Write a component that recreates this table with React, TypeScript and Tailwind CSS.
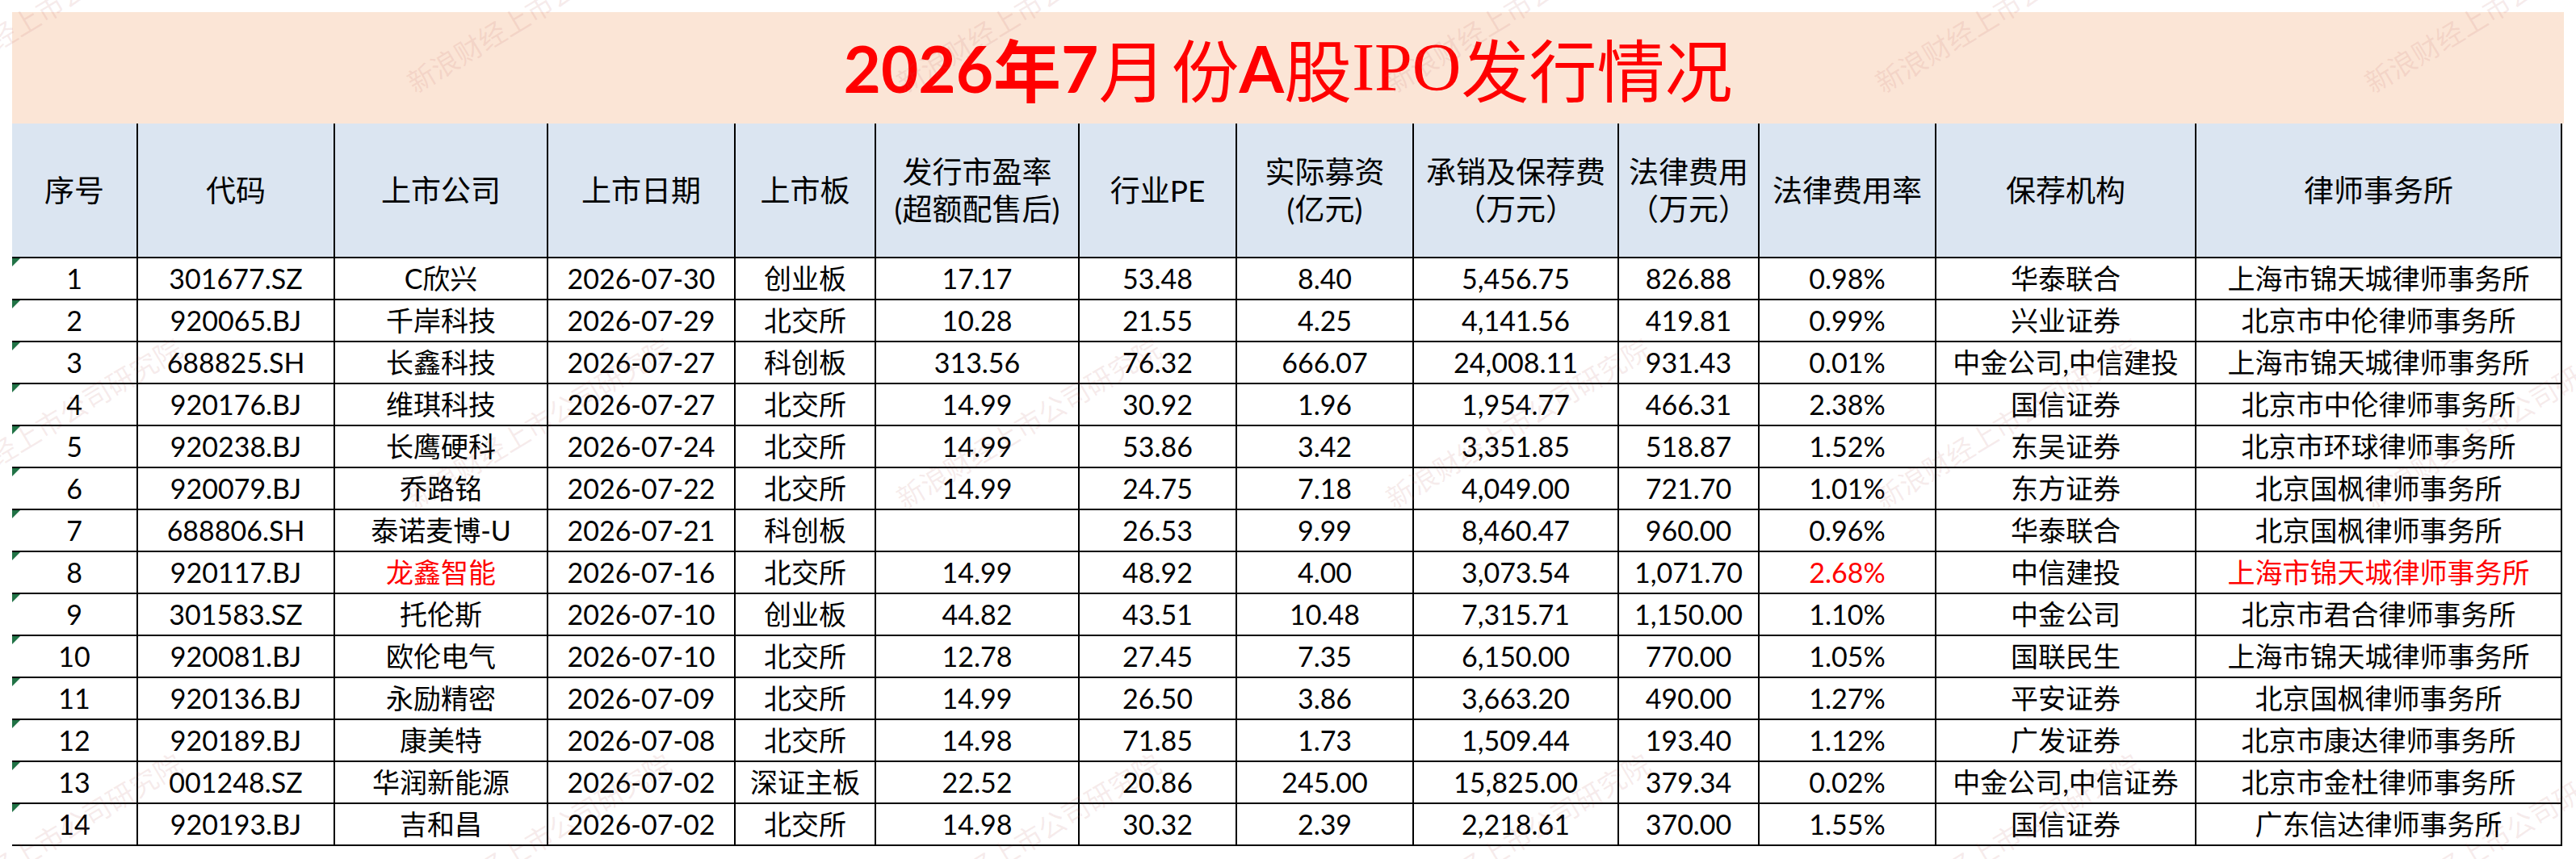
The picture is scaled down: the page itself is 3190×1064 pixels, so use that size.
type Row = {
  code: string;
  name: string;
  date: string;
  board: string;
  pe: string;
  industryPe: string;
  raised: string;
  fee: string;
  legal: string;
  rate: string;
  sponsor: string;
  firm: string;
  hot?: boolean;
};

const rows: Row[] = [
  { code: "301677.SZ", name: "C欣兴", date: "2026-07-30", board: "创业板", pe: "17.17", industryPe: "53.48", raised: "8.40", fee: "5,456.75", legal: "826.88", rate: "0.98%", sponsor: "华泰联合", firm: "上海市锦天城律师事务所" },
  { code: "920065.BJ", name: "千岸科技", date: "2026-07-29", board: "北交所", pe: "10.28", industryPe: "21.55", raised: "4.25", fee: "4,141.56", legal: "419.81", rate: "0.99%", sponsor: "兴业证券", firm: "北京市中伦律师事务所" },
  { code: "688825.SH", name: "长鑫科技", date: "2026-07-27", board: "科创板", pe: "313.56", industryPe: "76.32", raised: "666.07", fee: "24,008.11", legal: "931.43", rate: "0.01%", sponsor: "中金公司,中信建投", firm: "上海市锦天城律师事务所" },
  { code: "920176.BJ", name: "维琪科技", date: "2026-07-27", board: "北交所", pe: "14.99", industryPe: "30.92", raised: "1.96", fee: "1,954.77", legal: "466.31", rate: "2.38%", sponsor: "国信证券", firm: "北京市中伦律师事务所" },
  { code: "920238.BJ", name: "长鹰硬科", date: "2026-07-24", board: "北交所", pe: "14.99", industryPe: "53.86", raised: "3.42", fee: "3,351.85", legal: "518.87", rate: "1.52%", sponsor: "东吴证券", firm: "北京市环球律师事务所" },
  { code: "920079.BJ", name: "乔路铭", date: "2026-07-22", board: "北交所", pe: "14.99", industryPe: "24.75", raised: "7.18", fee: "4,049.00", legal: "721.70", rate: "1.01%", sponsor: "东方证券", firm: "北京国枫律师事务所" },
  { code: "688806.SH", name: "泰诺麦博-U", date: "2026-07-21", board: "科创板", pe: "", industryPe: "26.53", raised: "9.99", fee: "8,460.47", legal: "960.00", rate: "0.96%", sponsor: "华泰联合", firm: "北京国枫律师事务所" },
  { code: "920117.BJ", name: "龙鑫智能", date: "2026-07-16", board: "北交所", pe: "14.99", industryPe: "48.92", raised: "4.00", fee: "3,073.54", legal: "1,071.70", rate: "2.68%", sponsor: "中信建投", firm: "上海市锦天城律师事务所", hot: true },
  { code: "301583.SZ", name: "托伦斯", date: "2026-07-10", board: "创业板", pe: "44.82", industryPe: "43.51", raised: "10.48", fee: "7,315.71", legal: "1,150.00", rate: "1.10%", sponsor: "中金公司", firm: "北京市君合律师事务所" },
  { code: "920081.BJ", name: "欧伦电气", date: "2026-07-10", board: "北交所", pe: "12.78", industryPe: "27.45", raised: "7.35", fee: "6,150.00", legal: "770.00", rate: "1.05%", sponsor: "国联民生", firm: "上海市锦天城律师事务所" },
  { code: "920136.BJ", name: "永励精密", date: "2026-07-09", board: "北交所", pe: "14.99", industryPe: "26.50", raised: "3.86", fee: "3,663.20", legal: "490.00", rate: "1.27%", sponsor: "平安证券", firm: "北京国枫律师事务所" },
  { code: "920189.BJ", name: "康美特", date: "2026-07-08", board: "北交所", pe: "14.98", industryPe: "71.85", raised: "1.73", fee: "1,509.44", legal: "193.40", rate: "1.12%", sponsor: "广发证券", firm: "北京市康达律师事务所" },
  { code: "001248.SZ", name: "华润新能源", date: "2026-07-02", board: "深证主板", pe: "22.52", industryPe: "20.86", raised: "245.00", fee: "15,825.00", legal: "379.34", rate: "0.02%", sponsor: "中金公司,中信证券", firm: "北京市金杜律师事务所" },
  { code: "920193.BJ", name: "吉和昌", date: "2026-07-02", board: "北交所", pe: "14.98", industryPe: "30.32", raised: "2.39", fee: "2,218.61", legal: "370.00", rate: "1.55%", sponsor: "国信证券", firm: "广东信达律师事务所" },
];

const headers: string[][] = [
  ["序号"],
  ["代码"],
  ["上市公司"],
  ["上市日期"],
  ["上市板"],
  ["发行市盈率", "(超额配售后)"],
  ["行业PE"],
  ["实际募资", "(亿元)"],
  ["承销及保荐费", "（万元）"],
  ["法律费用", "（万元）"],
  ["法律费用率"],
  ["保荐机构"],
  ["律师事务所"],
];

const colWidths = [
  "w-[155px]", "w-[244px]", "w-[264px]", "w-[232px]", "w-[174px]", "w-[252px]", "w-[195px]",
  "w-[219px]", "w-[254px]", "w-[174px]", "w-[219px]", "w-[322px]", "w-[453px]",
];

// diagonal sina watermark grid
const wmCols = [-90, 516, 1122, 1728, 2334, 2940];
const wmRows = [120, 635, 1150];

function Watermarks() {
  return (
    <div className="pointer-events-none absolute inset-0 overflow-hidden">
      {wmRows.map((y) =>
        wmCols.map((x) => (
          <span
            key={`${x}-${y}`}
            className="absolute origin-bottom-left -rotate-[31deg] whitespace-nowrap text-[34px] leading-none text-[rgba(190,95,95,0.13)]"
            style={{ left: x, top: y - 34 }}
          >
            新浪财经上市公司研究院
          </span>
        ))
      )}
    </div>
  );
}

export default function App() {
  const cell = "border-2 border-black text-center align-middle whitespace-nowrap";
  return (
    <div className="relative h-[1064px] w-[3190px] overflow-hidden bg-white pl-[15px] pt-[15px] font-['Lato','Noto_Sans_CJK_SC',sans-serif] text-black">
      <div className="flex h-[138px] w-[3160px] items-center justify-center bg-[#fbe5d6] text-[#ff0000]">
        <span className="font-['Lato','Noto_Sans_CJK_SC',sans-serif] text-[80px] font-bold leading-none">2026</span>
        <span className="font-['Noto_Sans_CJK_SC',sans-serif] text-[84px] font-bold leading-none">年</span>
        <span className="font-['Lato',sans-serif] text-[80px] font-bold leading-none">7</span>
        <span className="mr-[6px] font-['Noto_Sans_CJK_SC',sans-serif] text-[84px] leading-none">月</span>
        <span className="font-['Noto_Sans_CJK_SC',sans-serif] text-[84px] leading-none">份</span>
        <span className="font-['Lato',sans-serif] text-[80px] font-bold leading-none">A</span>
        <span className="font-['Noto_Sans_CJK_SC',sans-serif] text-[84px] leading-none">股</span>
        <span className="font-['Liberation_Serif',serif] text-[84px] leading-none">IPO</span>
        <span className="font-['Noto_Sans_CJK_SC',sans-serif] text-[84px] leading-none">发行情况</span>
      </div>
      <table className="table-fixed border-collapse">
        <colgroup>
          {colWidths.map((w, i) => (
            <col key={i} className={w} />
          ))}
        </colgroup>
        <thead>
          <tr className="h-[166px] bg-[#dbe5f1]">
            {headers.map((h, i) => (
              <th
                key={i}
                className={`${cell} border-t-0 ${i === 0 ? "border-l-0" : ""} text-[37px] font-normal leading-[46px]`}
              >
                {h.map((line) => (
                  <div key={line}>{line}</div>
                ))}
              </th>
            ))}
          </tr>
        </thead>
        <tbody className="text-[34px] leading-none">
          {rows.map((r, i) => {
            const red = r.hot ? "text-[#ff0000]" : "";
            return (
              <tr key={r.code} className="h-[52px] bg-white">
                <td className={`${cell} relative border-l-0`}>
                  <span className="absolute left-0 top-0 h-0 w-0 border-r-[10px] border-t-[10px] border-r-transparent border-t-[#217346]" />
                  {i + 1}
                </td>
                <td className={cell}>{r.code}</td>
                <td className={`${cell} ${red}`}>{r.name}</td>
                <td className={cell}>{r.date}</td>
                <td className={cell}>{r.board}</td>
                <td className={cell}>{r.pe}</td>
                <td className={cell}>{r.industryPe}</td>
                <td className={cell}>{r.raised}</td>
                <td className={cell}>{r.fee}</td>
                <td className={cell}>{r.legal}</td>
                <td className={`${cell} ${red}`}>{r.rate}</td>
                <td className={cell}>{r.sponsor}</td>
                <td className={`${cell} ${red}`}>{r.firm}</td>
              </tr>
            );
          })}
        </tbody>
      </table>
      <Watermarks />
    </div>
  );
}
